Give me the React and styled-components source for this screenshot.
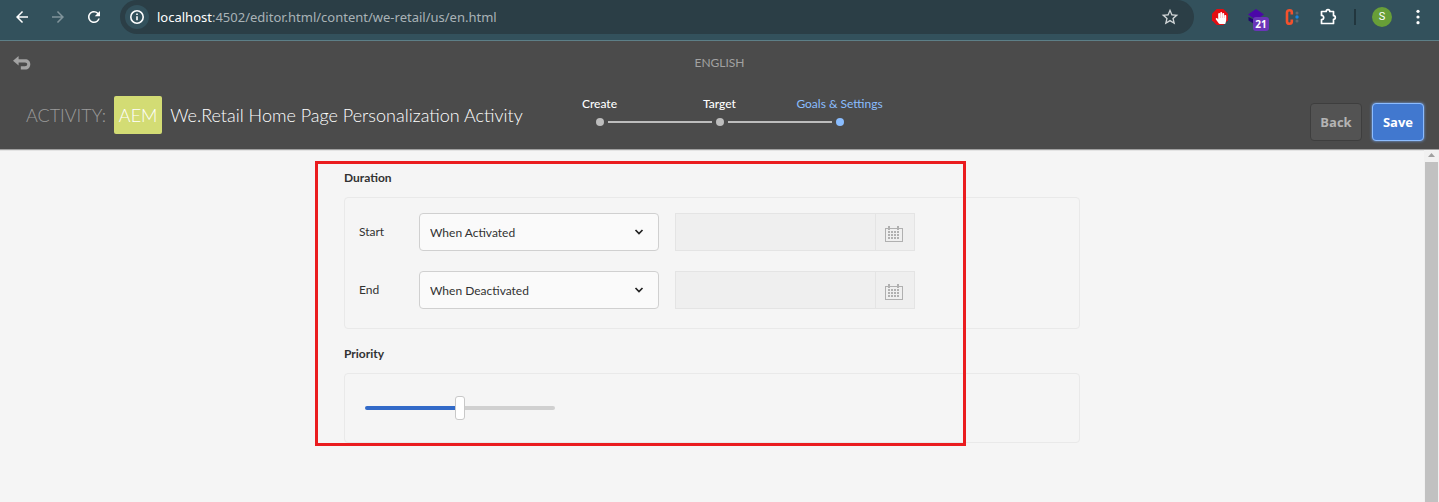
import React, { useState } from "react";
import styled, { createGlobalStyle, css } from "styled-components";
import { MdArrowBack, MdArrowForward, MdRefresh, MdStarBorder } from "react-icons/md";
import { FaHandPaper } from "react-icons/fa";

const GlobalStyle = createGlobalStyle`
  *, *::before, *::after { box-sizing: border-box; }
  body {
    margin: 0;
    background: #f5f5f5;
    color: #323232;
    font-family: Lato, "Open Sans", sans-serif;
    font-size: 12px;
  }
  button, input, select { font: inherit; color: inherit; margin: 0; }
`;

const Page = styled.div`
  display: flex;
  flex-direction: column;
  min-height: 100vh;
`;

/* Browser toolbar */

const Toolbar = styled.nav`
  display: flex;
  align-items: flex-start;
  height: 41px;
  background: #33515c;
  border-bottom: 1px solid #5d7f87;
`;

const ToolGroup = styled.div`
  display: flex;
  align-items: center;
  height: 34px;
  padding: ${(p) => p.$pad || "0"};
`;

const ToolButton = styled.button`
  display: flex;
  align-items: center;
  justify-content: center;
  position: relative;
  width: 36px;
  height: 34px;
  padding: 0;
  border: 0;
  background: none;
  color: ${(p) => (p.$dim ? "#81949b" : "#ffffff")};
`;

const AddressBar = styled.div`
  display: flex;
  align-items: center;
  flex: 1;
  height: 34px;
  padding: 0 6px 0 5px;
  border-radius: 17px;
  background: #2b3e46;
`;

const InfoButton = styled.button`
  display: flex;
  align-items: center;
  justify-content: center;
  width: 24px;
  height: 24px;
  padding: 0;
  border: 0;
  border-radius: 50%;
  background: #33515c;
`;

const Url = styled.span`
  flex: 1;
  padding-left: 8px;
  font-family: "Noto Sans", "Open Sans", sans-serif;
  font-size: 13px;
  line-height: 18px;
  color: #a9b3b7;
`;

const Host = styled.span`
  color: #ffffff;
`;

const CountBadge = styled.span`
  position: absolute;
  left: 15px;
  top: 17px;
  width: 16px;
  height: 14px;
  border-radius: 3px;
  background: #6a35b8;
  color: #ffffff;
  font-family: "Open Sans", sans-serif;
  font-size: 10px;
  font-weight: 700;
  line-height: 14px;
  text-align: center;
`;

const ToolDivider = styled.span`
  width: 2px;
  height: 16px;
  margin: 0 8px;
  background: #22363e;
`;

const Avatar = styled.span`
  width: 20px;
  height: 20px;
  border-radius: 50%;
  background: #689f38;
  color: #ffffff;
  font-family: Roboto, sans-serif;
  font-size: 11px;
  line-height: 20px;
  text-align: center;
`;

/* Editor header */

const Header = styled.header`
  background: #4b4b4b;
  border-bottom: 1px solid #a0a0a0;
  box-shadow: 0 1px 0 #e3e3e3;
  color: #ffffff;
`;

const HeaderTop = styled.div`
  display: grid;
  grid-template-columns: 1fr auto 1fr;
  align-items: center;
  height: 44px;
  padding: 0 12px;
`;

const UndoButton = styled.button`
  display: flex;
  justify-self: start;
  padding: 0;
  border: 0;
  background: none;
`;

const Language = styled.span`
  font-size: 12px;
  line-height: 18px;
  color: #a2a2a2;
`;

const HeaderMain = styled.div`
  display: grid;
  grid-template-columns: minmax(0, 1fr) 360px minmax(0, 1fr);
  align-items: start;
  height: 64px;
`;

const Title = styled.h1`
  display: flex;
  align-items: center;
  gap: 8px;
  margin: 0;
  padding: 11px 0 0 26px;
  font-size: 18px;
  font-weight: 300;
  line-height: 38px;
  white-space: nowrap;
`;

const TitleKind = styled.span`
  color: #9b9b9b;
`;

const AemTag = styled.span`
  width: 48px;
  height: 38px;
  border-radius: 2px;
  background: #d3dc74;
  text-align: center;
`;

const Steps = styled.ol`
  display: flex;
  margin: 0;
  padding: 10px 0 0;
  list-style: none;
`;

const Step = styled.li`
  display: flex;
  flex-direction: column;
  align-items: center;
  flex: 1;
  color: ${(p) => (p.$active ? "#8abdff" : "#ffffff")};
  font-size: 12px;
  font-weight: ${(p) => (p.$active ? 400 : 500)};
  line-height: 18px;
`;

const StepTrack = styled.span`
  display: grid;
  grid-template-columns: 1fr 8px 1fr;
  align-items: center;
  gap: 4px;
  width: 100%;
  height: 18px;
`;

const StepLine = styled.span`
  height: 2px;
  background: ${(p) => (p.$hidden ? "transparent" : "#bdbdbd")};
`;

const StepDot = styled.span`
  width: 8px;
  height: 8px;
  border-radius: 50%;
  background: ${(p) => (p.$active ? "#8abdff" : "#bdbdbd")};
`;

const Actions = styled.div`
  display: flex;
  justify-content: flex-end;
  gap: 10px;
  padding: 18px 15px 0 0;
`;

const ActionButton = styled.button`
  width: 52px;
  height: 38px;
  padding: 0;
  border: 1px solid #3e3e3e;
  border-radius: 4px;
  background: #535353;
  color: #b4b4b4;
  font-family: "Open Sans", sans-serif;
  font-size: 13px;
  font-weight: 700;
  ${(p) =>
    p.$primary &&
    css`
      border-color: #8cbcff;
      background: #4178cf;
      color: #ffffff;
      box-shadow: 0 0 3px #78a8f0;
    `}
`;

/* Settings form */

const Workspace = styled.div`
  display: flex;
  flex: 1;
`;

const Content = styled.main`
  flex: 1;
  padding: 19px 16px;
`;

const Form = styled.form`
  position: relative;
  max-width: 736px;
  margin: 0 auto;
`;

const Highlight = styled.div`
  position: absolute;
  left: -29px;
  top: -8px;
  width: 651px;
  height: 285px;
  border: 3px solid #ea1c1f;
  pointer-events: none;
`;

const Section = styled.section`
  & + & { margin-top: 16px; }
`;

const SectionTitle = styled.h2`
  margin: 0 0 10px;
  font-size: 12px;
  font-weight: 700;
  line-height: 18px;
`;

const Panel = styled.div`
  display: flex;
  flex-direction: column;
  gap: 20px;
  padding: ${(p) => p.$pad};
  border: 1px solid #e9e9e9;
  border-radius: 4px;
`;

const Row = styled.div`
  display: grid;
  grid-template-columns: 60px 240px 256px;
  align-items: center;
`;

const Label = styled.label`
  line-height: 18px;
`;

const SelectWrap = styled.div`
  display: grid;
  align-items: center;

  & > * { grid-area: 1 / 1; }
  & > svg {
    justify-self: end;
    margin-right: 15px;
    pointer-events: none;
  }
`;

const Select = styled.select`
  appearance: none;
  width: 100%;
  height: 38px;
  padding: 0 32px 0 10px;
  border: 1px solid #d0d0d0;
  border-radius: 4px;
  background: #fafafa;
`;

const DateField = styled.div`
  display: flex;
  width: 240px;
  height: 38px;
  margin-left: 16px;
  border: 1px solid #e4e4e4;
  background: #efefef;
`;

const DateInput = styled.input`
  flex: 1;
  min-width: 0;
  padding: 0 10px;
  border: 0;
  background: transparent;
`;

const DateButton = styled.button`
  display: flex;
  align-items: center;
  justify-content: center;
  width: 39px;
  padding: 4px 2px 0 0;
  border: 0;
  border-left: 1px solid #e4e4e4;
  background: transparent;
`;

const Slider = styled.input`
  appearance: none;
  display: block;
  width: 190px;
  height: 24px;
  background: transparent;

  &::-webkit-slider-runnable-track {
    height: 4px;
    border-radius: 2px;
    background: linear-gradient(to right, #326ac8 var(--fill), #d0d0d0 var(--fill));
  }
  &::-webkit-slider-thumb {
    appearance: none;
    width: 10px;
    height: 24px;
    margin-top: -10px;
    border: 1px solid #c8c8c8;
    border-radius: 3px;
    background: #ffffff;
  }
`;

const Scrollbar = styled.div`
  display: flex;
  flex-direction: column;
  align-items: center;
  width: 15px;
  padding-top: 3px;
  background: #f1f1f1;
`;

const ScrollThumb = styled.span`
  flex: 1;
  width: 13px;
  margin-top: 5px;
  background: #c1c1c1;
`;

function InfoIcon() {
  return (
    <svg width="16" height="16" viewBox="0 0 16 16" fill="none" stroke="#fff" strokeWidth="1.6">
      <circle cx="8" cy="8" r="6.2" />
      <path d="M8 7.2v4M8 4.4v1.6" />
    </svg>
  );
}

function BlockerIcon() {
  return (
    <svg width="16" height="16" viewBox="0 0 16 16">
      <path d="M4.7 0h6.6L16 4.7v6.6L11.3 16H4.7L0 11.3V4.7z" fill="#e40d12" />
      <FaHandPaper x="3" y="3" width="10" height="10" color="#fff" />
    </svg>
  );
}

function DiamondIcon() {
  return (
    <svg width="18" height="18" viewBox="0 0 18 18">
      <path d="M1.5 9l7.5 3.6L16.5 9v3.5L9 17l-7.5-4.5z" fill="#1f0a6e" />
      <path d="M9 1l8 5.5L9 12 1 6.5z" fill="#4b07a8" />
    </svg>
  );
}

function ColonIcon() {
  return (
    <svg width="16" height="18" viewBox="0 0 16 18">
      <path
        d="M7.8 6.5V4.2C7.8 2.8 6.9 2.2 5.5 2.2S3 3 3 4.6v8.8C3 15 4.1 15.8 5.5 15.8s2.3-.8 2.3-2.2V11.500"
        fill="none"
        stroke="#f4512c"
        strokeWidth="2.6"
      />
      <circle cx="13" cy="5" r="1.5" fill="#63666b" />
      <circle cx="13" cy="9" r="1.7" fill="#1583e0" />
      <circle cx="13" cy="13" r="1.5" fill="#63666b" />
    </svg>
  );
}

function ExtensionsIcon() {
  return (
    <svg width="20" height="20" viewBox="0 0 20 20" fill="none" stroke="#fff" strokeWidth="1.7" strokeLinejoin="round">
      <path d="M3.500 4.500h4.700a1.800 1.800 0 0 1 3.600 0H15.500V8.700a1.800 1.800 0 0 1 0 3.600V16.500H3.500v-3.900c1.400 0 2.200-.9 2.200-2.100S4.900 8.400 3.500 8.400z" />
    </svg>
  );
}

function KebabIcon() {
  return (
    <svg width="4" height="16" viewBox="0 0 4 16" fill="#fff">
      <circle cx="2" cy="2.3" r="1.6" />
      <circle cx="2" cy="8" r="1.6" />
      <circle cx="2" cy="13.7" r="1.6" />
    </svg>
  );
}

function UndoIcon() {
  return (
    <svg width="20" height="16" viewBox="0 0 20 16">
      <path d="M1 5.7L6.6 1v3.2h6.4c3.3 0 5.3 2 5.3 5s-2 5.300-5.100 5.300H8.800v-3.200h4.200c1.400 0 2.200-.7 2.200-2 0-1.200-.8-1.900-2.200-1.900H6.600v3.200z" fill="#a3a3a3" />
    </svg>
  );
}

function ChevronIcon() {
  return (
    <svg width="10" height="8" viewBox="0 0 10 8" fill="none" stroke="#222" strokeWidth="1.7">
      <path d="M1.5 2L5 5.500 8.500 2" />
    </svg>
  );
}

function CalendarIcon() {
  const cells = [0, 1, 2].flatMap((r) => [0, 1, 2, 3].map((c) => [c, r]));
  return (
    <svg width="18" height="17" viewBox="0 0 18 17" fill="#b0b0b0">
      <path d="M0 2h18v14H0zM1 3v12h16V3z" fillRule="evenodd" />
      <rect x="3" y="0" width="2" height="4" />
      <rect x="12" y="0" width="2" height="4" />
      {cells.map(([c, r]) => (
        <rect key={`${c}-${r}`} x={3 + c * 3} y={5 + r * 3} width="2" height="2" />
      ))}
    </svg>
  );
}

function DurationRow({ id, label, option }) {
  return (
    <Row>
      <Label htmlFor={id}>{label}</Label>
      <SelectWrap>
        <Select id={id} defaultValue={option}>
          <option>{option}</option>
        </Select>
        <ChevronIcon />
      </SelectWrap>
      <DateField>
        <DateInput type="text" disabled aria-label={`${label} date`} />
        <DateButton type="button" disabled aria-label={`Pick ${label.toLowerCase()} date`}>
          <CalendarIcon />
        </DateButton>
      </DateField>
    </Row>
  );
}

const STEPS = ["Create", "Target", "Goals & Settings"];

export default function App() {
  const [priority, setPriority] = useState(50);
  const last = STEPS.length - 1;

  return (
    <Page>
      <GlobalStyle />
      <Toolbar>
        <ToolGroup $pad="0 8px 0 4px">
          <ToolButton aria-label="Back"><MdArrowBack size={18} /></ToolButton>
          <ToolButton aria-label="Forward" $dim><MdArrowForward size={18} /></ToolButton>
          <ToolButton aria-label="Reload"><MdRefresh size={18} /></ToolButton>
        </ToolGroup>
        <AddressBar>
          <InfoButton aria-label="Site information"><InfoIcon /></InfoButton>
          <Url><Host>localhost</Host>:4502/editor.html/content/we-retail/us/en.html</Url>
          <ToolButton aria-label="Bookmark"><MdStarBorder size={20} color="#d0d5d7" /></ToolButton>
        </AddressBar>
        <ToolGroup $pad="0 3px 0 8px">
          <ToolButton aria-label="Ad blocker"><BlockerIcon /></ToolButton>
          <ToolButton aria-label="Extension with 21 items">
            <DiamondIcon />
            <CountBadge>21</CountBadge>
          </ToolButton>
          <ToolButton aria-label="Colon extension"><ColonIcon /></ToolButton>
          <ToolButton aria-label="Extensions"><ExtensionsIcon /></ToolButton>
          <ToolDivider />
          <ToolButton aria-label="Profile"><Avatar>S</Avatar></ToolButton>
          <ToolButton aria-label="Menu"><KebabIcon /></ToolButton>
        </ToolGroup>
      </Toolbar>

      <Header>
        <HeaderTop>
          <UndoButton aria-label="Undo"><UndoIcon /></UndoButton>
          <Language>ENGLISH</Language>
        </HeaderTop>
        <HeaderMain>
          <Title>
            <TitleKind>ACTIVITY:</TitleKind>
            <AemTag>AEM</AemTag>
            <span>We.Retail Home Page Personalization Activity</span>
          </Title>
          <Steps>
            {STEPS.map((name, i) => (
              <Step key={name} $active={i === last}>
                {name}
                <StepTrack>
                  <StepLine $hidden={i === 0} />
                  <StepDot $active={i === last} />
                  <StepLine $hidden={i === last} />
                </StepTrack>
              </Step>
            ))}
          </Steps>
          <Actions>
            <ActionButton type="button">Back</ActionButton>
            <ActionButton type="submit" form="activity-settings" $primary>Save</ActionButton>
          </Actions>
        </HeaderMain>
      </Header>

      <Workspace>
        <Content>
          <Form id="activity-settings" onSubmit={(e) => e.preventDefault()}>
            <Section>
              <SectionTitle>Duration</SectionTitle>
              <Panel $pad="15px 14px 19px">
                <DurationRow id="start" label="Start" option="When Activated" />
                <DurationRow id="end" label="End" option="When Deactivated" />
              </Panel>
            </Section>
            <Section>
              <SectionTitle id="priority-title">Priority</SectionTitle>
              <Panel $pad="22px 20px">
                <Slider
                  type="range"
                  aria-labelledby="priority-title"
                  value={priority}
                  onChange={(e) => setPriority(Number(e.target.value))}
                  style={{ "--fill": `${priority}%` }}
                />
              </Panel>
            </Section>
            <Highlight />
          </Form>
        </Content>
        <Scrollbar aria-hidden="true">
          <svg width="7" height="4" viewBox="0 0 7 4"><path d="M3.5 0L7 4H0z" fill="#a0a0a0" /></svg>
          <ScrollThumb />
        </Scrollbar>
      </Workspace>
    </Page>
  );
}
